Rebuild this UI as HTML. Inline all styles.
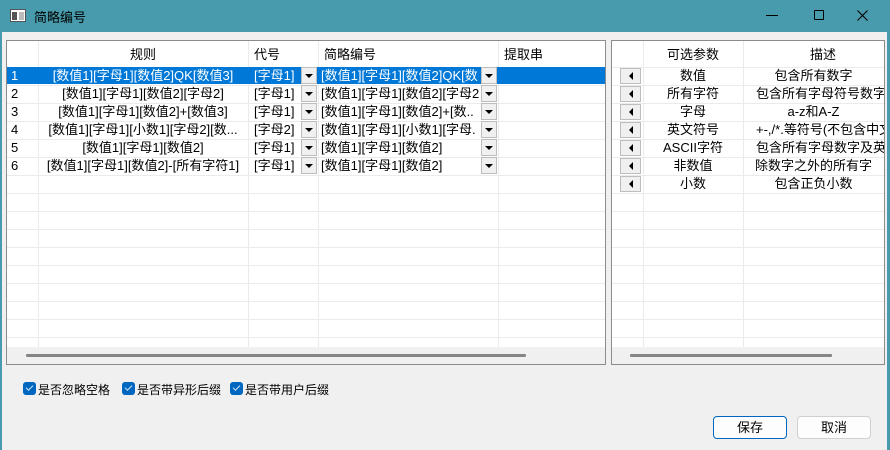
<!DOCTYPE html>
<html><head><meta charset="utf-8"><style>
*{box-sizing:border-box;margin:0;padding:0}
body{width:890px;height:450px;overflow:hidden;background:#479bac;font-family:"Liberation Sans","Microsoft YaHei","Noto Sans CJK SC",sans-serif;font-size:13px;color:#000;position:relative}
.abs{position:absolute}
.win{left:2px;top:32px;width:885px;height:418px;background:#f0f0f0}
.title{left:34px;top:7px;font-size:13px;color:#000}
.grid{background:#fff;border:1px solid #8c8c8c;overflow:hidden}
.rows{background-image:repeating-linear-gradient(to bottom,transparent 0,transparent 17px,#ebebeb 17px,#ebebeb 18px)}
.vl{position:absolute;top:0;width:1px;background:#ebebeb}
.cell{position:absolute;height:18px;line-height:18px;white-space:nowrap;overflow:hidden}
.dd{position:absolute;width:16px;height:17px;background:#f0f0f0;border:1px solid #bdbdbd}
.dd:after{content:"";position:absolute;left:3px;top:6px;border-left:4px solid transparent;border-right:4px solid transparent;border-top:4px solid #000}
.lb{position:absolute;width:21px;height:16px;background:#f0f0f0;border:1px solid #bdbdbd;left:8px}
.lb:after{content:"";position:absolute;left:8px;top:3px;border-top:4px solid transparent;border-bottom:4px solid transparent;border-right:4px solid #000}
.cb{position:absolute;top:382px;width:13px;height:13px;background:#0067c0;border-radius:3px}
.cb:after{content:"";position:absolute;left:3px;top:3px;width:6px;height:3px;border-left:1px solid #cfe4f7;border-bottom:1px solid #cfe4f7;transform:rotate(-45deg)}
.lbl{position:absolute;top:381px;font-size:12px}
.btn{position:absolute;top:416px;width:74px;height:23px;background:#fdfdfd;border:1px solid #d0d0d0;border-radius:4px;text-align:center;line-height:21px;font-size:13px}
</style></head><body>
<div class="abs" style="left:10px;top:9px;width:16px;height:13px;border:1px solid #555;background:#fff"><div class="abs" style="left:1px;top:2px;width:5px;height:8px;background:#555"></div><div class="abs" style="left:8px;top:2px;width:5px;height:8px;background:#bbb"></div></div>
<div class="abs title">简略编号</div>
<div class="abs" style="left:766px;top:15px;width:12px;height:1px;background:#000"></div>
<div class="abs" style="left:814px;top:10px;width:10px;height:10px;border:1px solid #000;border-radius:1px"></div>
<svg class="abs" style="left:857px;top:10px" width="11" height="11"><path d="M0.5 0.5L10.5 10.5M10.5 0.5L0.5 10.5" stroke="#000" stroke-width="1.1"/></svg>
<div class="abs win"></div>

<div class="abs grid" style="left:6px;top:40px;width:600px;height:325px">
 <div class="abs rows" style="left:0;top:27px;width:598px;height:279px"></div>
 <div class="abs" style="left:0;top:26px;width:598px;height:1px;background:#ebebeb"></div>
 <div class="vl" style="left:31px;height:306px"></div>
 <div class="vl" style="left:241px;height:306px"></div>
 <div class="vl" style="left:311px;height:306px"></div>
 <div class="vl" style="left:491px;height:306px"></div>
 <div class="abs" style="left:0;top:306px;width:598px;height:18px;background:#f0f0f0"></div>
 <div class="abs" style="left:19px;top:313px;width:500px;height:3px;background:#858585;border-radius:1px"></div>
 <div class="cell" style="left:31px;top:5px;width:210px;text-align:center">规则</div>
 <div class="cell" style="left:247px;top:5px">代号</div>
 <div class="cell" style="left:317px;top:5px">简略编号</div>
 <div class="cell" style="left:497px;top:5px">提取串</div>
 <div class="abs" style="left:0;top:26px;width:598px;height:17px;background:#0078d7"></div>
</div>
<div id="L" class="abs" style="left:7px;top:67px"></div>

<div class="abs grid" style="left:611px;top:40px;width:274px;height:325px">
 <div class="abs rows" style="left:0;top:27px;width:272px;height:279px"></div>
 <div class="abs" style="left:0;top:26px;width:272px;height:1px;background:#ebebeb"></div>
 <div class="vl" style="left:31px;height:306px"></div>
 <div class="vl" style="left:131px;height:306px"></div>
 <div class="abs" style="left:0;top:306px;width:272px;height:18px;background:#f0f0f0"></div>
 <div class="abs" style="left:18px;top:313px;width:202px;height:3px;background:#858585;border-radius:1px"></div>
 <div class="cell" style="left:31px;top:5px;width:100px;text-align:center">可选参数</div>
 <div class="cell" style="left:131px;top:5px;width:160px;text-align:center">描述</div>
</div>
<div id="R" class="abs" style="left:612px;top:67px"></div>

<div class="cb" style="left:23px"></div><div class="lbl" style="left:38px">是否忽略空格</div>
<div class="cb" style="left:122px"></div><div class="lbl" style="left:137px">是否带异形后缀</div>
<div class="cb" style="left:230px"></div><div class="lbl" style="left:245px">是否带用户后缀</div>
<div class="btn" style="left:713px;border:1px solid #0067c0">保存</div>
<div class="btn" style="left:797px">取消</div>

<script>
var L=[["[数值1][字母1][数值2]QK[数值3]","[字母1]","[数值1][字母1][数值2]QK[数"],
["[数值1][字母1][数值2][字母2]","[字母1]","[数值1][字母1][数值2][字母2"],
["[数值1][字母1][数值2]+[数值3]","[字母1]","[数值1][字母1][数值2]+[数.."],
["[数值1][字母1][小数1][字母2][数...","[字母2]","[数值1][字母1][小数1][字母."],
["[数值1][字母1][数值2]","[字母1]","[数值1][字母1][数值2]"],
["[数值1][字母1][数值2]-[所有字符1]","[字母1]","[数值1][字母1][数值2]"]];
var h="";
L.forEach(function(r,i){var y=i*18,c=i==0?"color:#fff;":"";
h+='<div class="cell" style="'+c+'left:4px;top:'+y+'px">'+(i+1)+'</div>';
h+='<div class="cell" style="'+c+'left:31px;top:'+y+'px;width:210px;text-align:center">'+r[0]+'</div>';
h+='<div class="cell" style="'+c+'left:247px;top:'+y+'px;width:47px">'+r[1]+'</div>';
h+='<div class="dd" style="left:294px;top:'+y+'px"></div>';
h+='<div class="cell" style="'+c+'left:314px;top:'+y+'px;width:160px">'+r[2]+'</div>';
h+='<div class="dd" style="left:474px;top:'+y+'px"></div>';});
document.getElementById("L").innerHTML=h;
var R=[["数值","包含所有数字"],["所有字符","包含所有字母符号数字及"],["字母","a-z和A-Z"],["英文符号","+-,/*.等符号(不包含中文"],["ASCII字符","包含所有字母数字及英文"],["非数值","除数字之外的所有字"],["小数","包含正负小数"]];
h="";
R.forEach(function(r,i){var y=i*18,lf=(i==1||i==3||i==4);
h+='<div class="lb" style="top:'+(y+1)+'px"></div>';
h+='<div class="cell" style="left:31px;top:'+y+'px;width:100px;text-align:center">'+r[0]+'</div>';
h+='<div class="cell" style="left:131px;top:'+y+'px;width:141px;text-align:'+(lf?'left':'center')+';padding-left:'+(lf?'13px':'0')+'">'+r[1]+'</div>';});
document.getElementById("R").innerHTML=h;
</script>
</body></html>
